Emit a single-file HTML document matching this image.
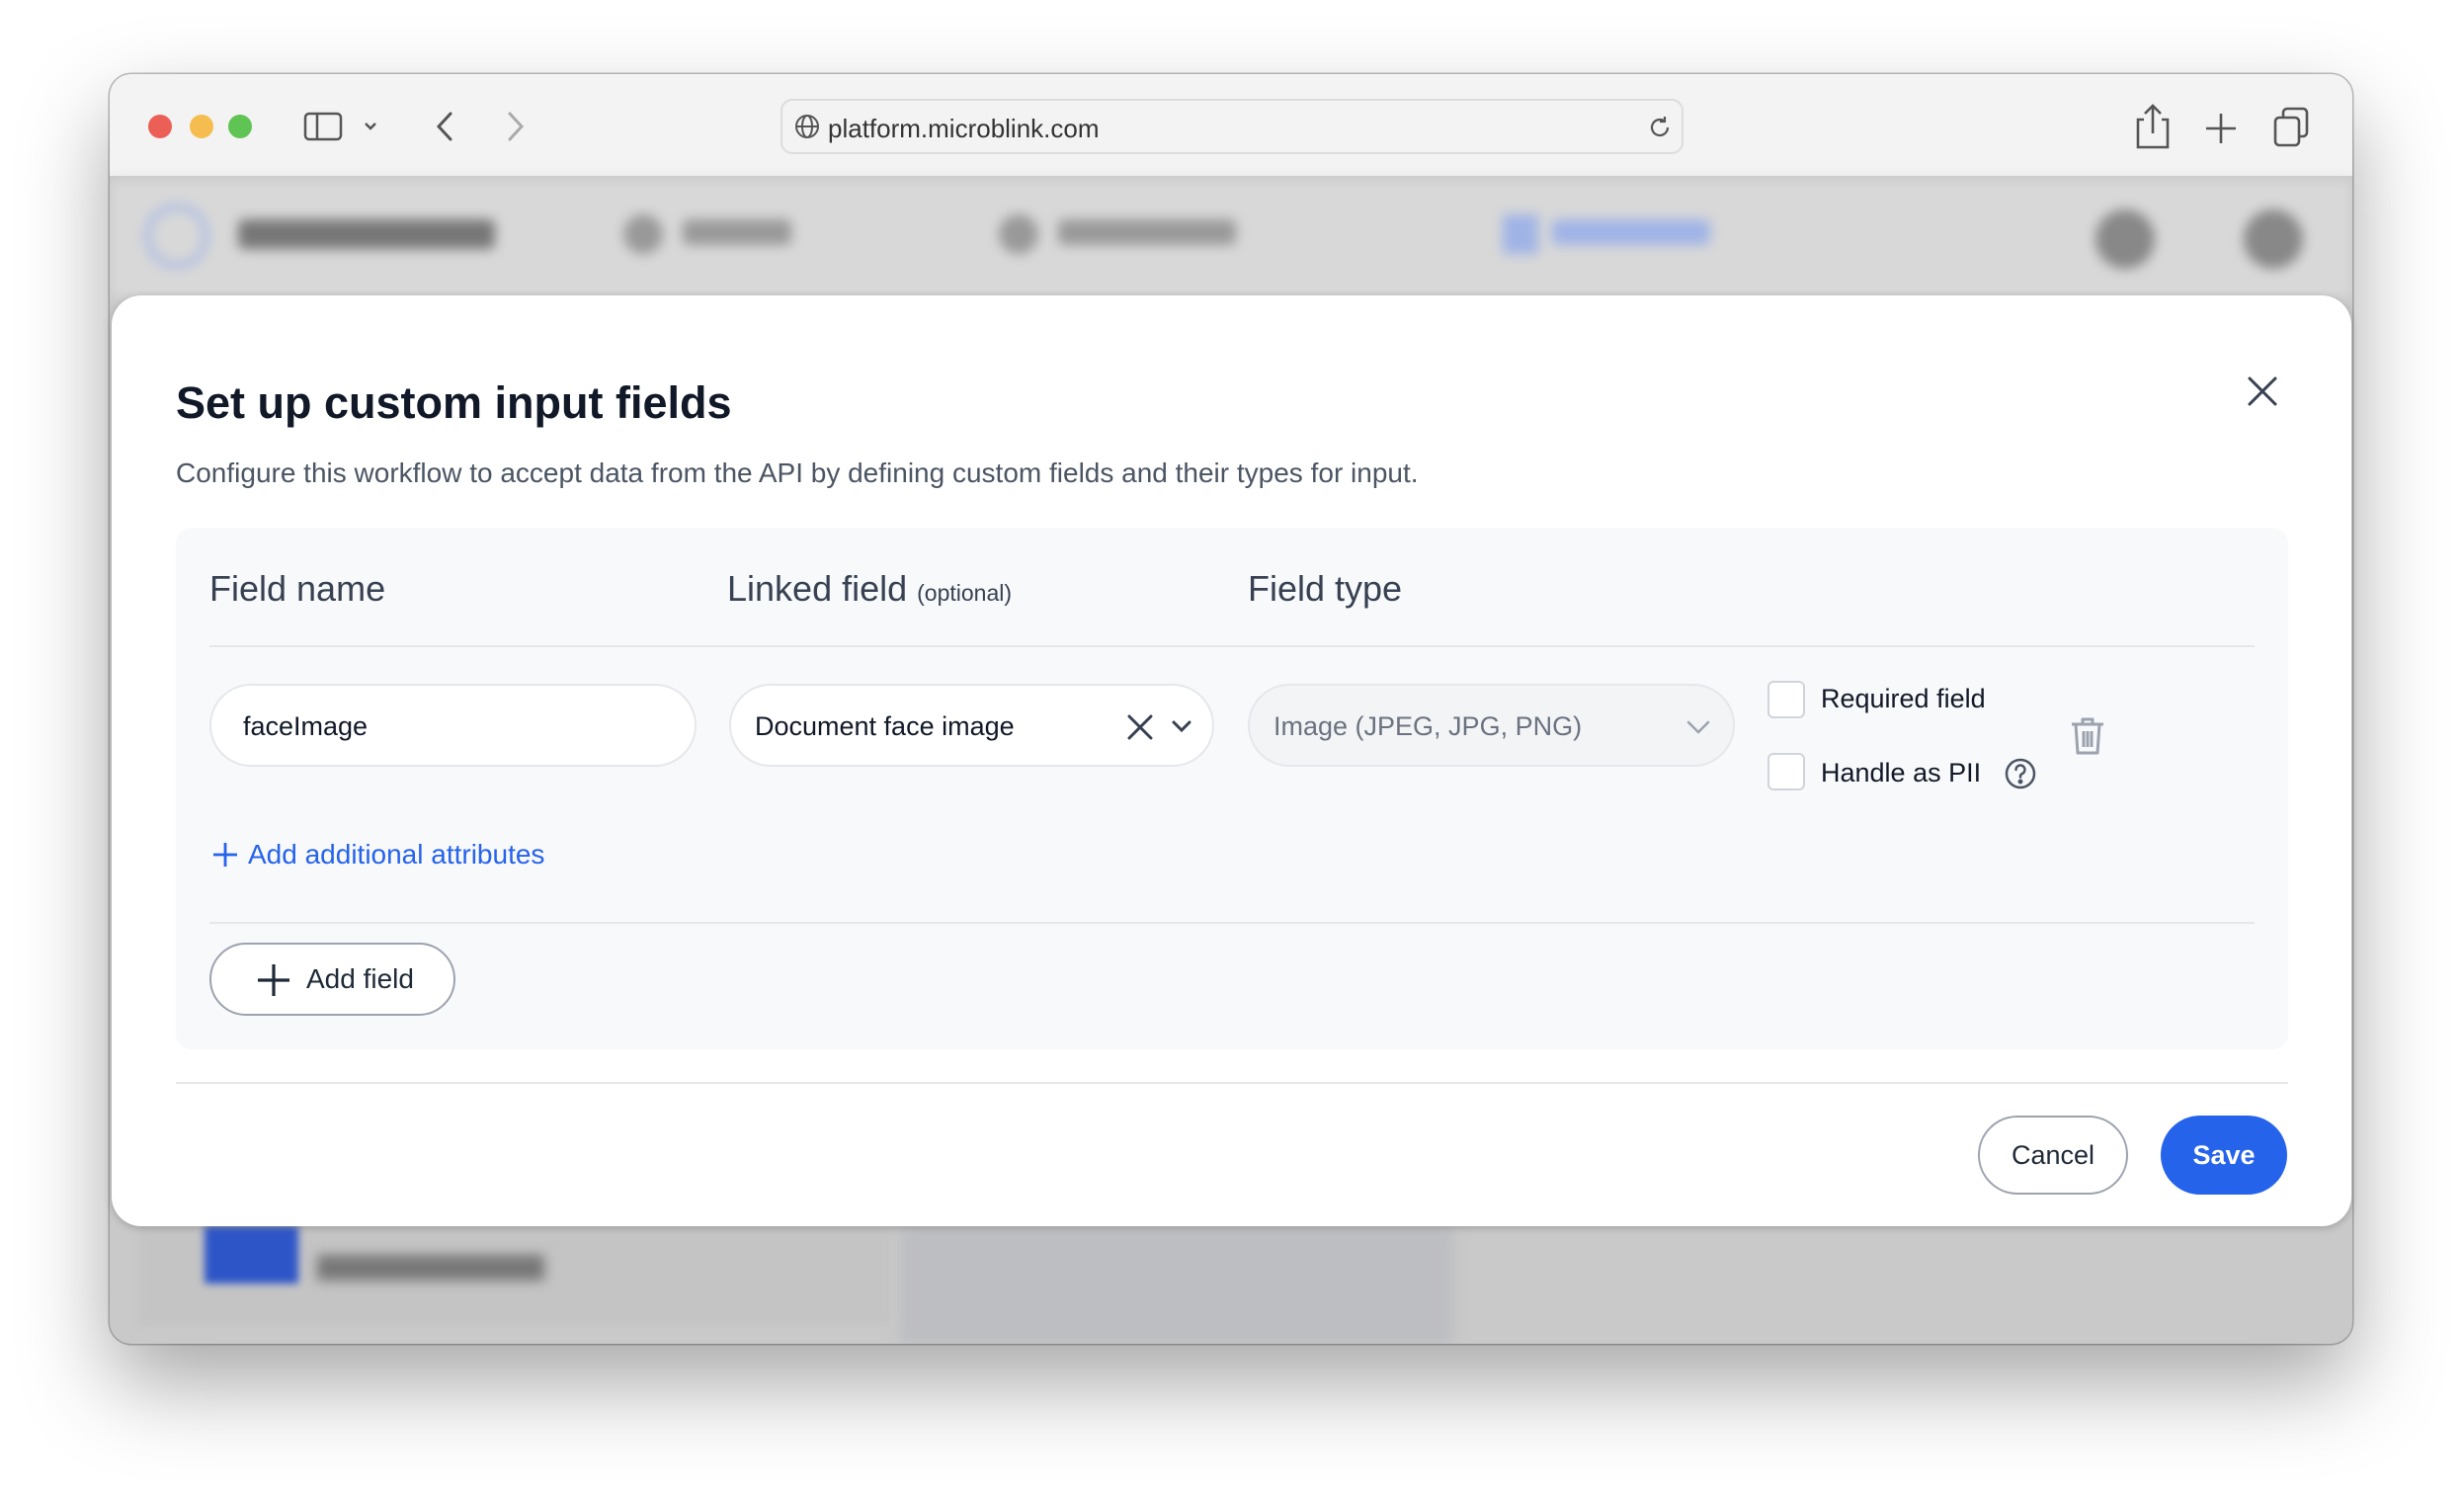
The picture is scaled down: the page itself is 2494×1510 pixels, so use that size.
<!DOCTYPE html>
<html><head><meta charset="utf-8"><style>
*{box-sizing:border-box;margin:0;padding:0}
body{width:2494px;height:1510px;background:#fff;font-family:"Liberation Sans",Arial,sans-serif;position:relative;overflow:hidden}
.win{position:absolute;left:111px;top:75px;width:2270px;height:1285px;border-radius:22px;overflow:hidden;box-shadow:0 40px 90px rgba(0,0,0,.35),0 0 0 1.5px rgba(0,0,0,.25);background:#c9c9ca}
.tb{position:absolute;left:0;top:0;width:100%;height:105px;background:#f3f3f3;border-bottom:2px solid #c9c9c9}
.dot{position:absolute;top:41px;width:24px;height:24px;border-radius:50%}
.url{position:absolute;left:679px;top:25px;width:914px;height:56px;border:2px solid #dcdcdc;border-radius:12px;background:#f3f3f3}
.url span{position:absolute;left:46px;top:13px;font-size:26px;color:#333}
.nav{position:absolute;left:0;top:107px;width:100%;height:120px;background:#d8d8d8;filter:blur(6px)}
.abs{position:absolute}
.modal{position:absolute;left:113px;top:299px;width:2267px;height:942px;background:#fff;border-radius:30px;box-shadow:0 2px 8px rgba(0,0,0,.2)}
.t{position:absolute;white-space:nowrap}
.inp{position:absolute;top:692px;height:84px;border:2px solid #e5e7eb;border-radius:42px;background:#fff;font-size:27px;color:#111827}
.inp span{position:absolute;left:32px;top:26px}
.cb{position:absolute;left:1789px;width:38px;height:38px;border:2px solid #d1d5db;border-radius:6px;background:#fff}
.btn{position:absolute;border-radius:40px;font-size:27px;text-align:center}
</style></head><body>
<div class="win">
 <div class="tb">
  <div class="dot" style="left:39px;background:#ec5f57"></div>
  <div class="dot" style="left:81px;background:#f5bd4f"></div>
  <div class="dot" style="left:120px;background:#5fc454"></div>
  <svg class="abs" style="left:196px;top:37px" width="80" height="32" viewBox="0 0 80 32" fill="none" stroke="#555" stroke-width="2.5"><rect x="2" y="3" width="36" height="26" rx="4"/><line x1="14" y1="3" x2="14" y2="29"/><path d="M63 13l5 5 5-5"/></svg>
  <svg class="abs" style="left:327px;top:36px" width="120" height="34" viewBox="0 0 120 34" fill="none" stroke-width="3" stroke-linecap="round"><path d="M18 4L6 17l12 13" stroke="#555"/><path d="M78 4l12 13-12 13" stroke="#aaa"/></svg>
  <div class="url">
   <svg class="abs" style="left:12px;top:13px" width="26" height="26" viewBox="0 0 26 26" fill="none" stroke="#555" stroke-width="2"><circle cx="13" cy="13" r="11"/><ellipse cx="13" cy="13" rx="5" ry="11"/><line x1="2" y1="13" x2="24" y2="13"/></svg>
   <span>platform.microblink.com</span>
   <svg class="abs" style="left:874px;top:13px" width="28" height="28" viewBox="0 0 28 28" fill="none" stroke="#555" stroke-width="2.2"><path d="M22 14a8 8 0 1 1-3-6.2"/><path d="M19 3v5h-5"/></svg>
  </div>
  <svg class="abs" style="left:2050px;top:28px" width="180" height="50" viewBox="0 0 180 50" fill="none" stroke="#555" stroke-width="2.6"><path d="M9 18H3v28h30V18h-6M18 4v28M10 12l8-8 8 8"/><path d="M87 12v30M72 27h30"/><rect x="142" y="16" width="24" height="28" rx="4"/><path d="M150 16v-5a4 4 0 0 1 4-4h16a4 4 0 0 1 4 4v20a4 4 0 0 1-4 4h-4"/></svg>
 </div>
 <div class="nav">
  <div class="abs" style="left:36px;top:25px;width:64px;height:64px;border-radius:50%;border:5px solid #9fb3e6"></div>
  <div class="abs" style="left:130px;top:40px;width:260px;height:30px;background:#777;border-radius:6px"></div>
  <div class="abs" style="left:520px;top:35px;width:40px;height:40px;border-radius:50%;background:#999"></div>
  <div class="abs" style="left:580px;top:40px;width:110px;height:26px;background:#999;border-radius:6px"></div>
  <div class="abs" style="left:900px;top:35px;width:40px;height:40px;border-radius:50%;background:#999"></div>
  <div class="abs" style="left:960px;top:40px;width:180px;height:26px;background:#999;border-radius:6px"></div>
  <div class="abs" style="left:1410px;top:35px;width:36px;height:40px;background:#9fb3e6"></div>
  <div class="abs" style="left:1460px;top:40px;width:160px;height:26px;background:#9fb3e6;border-radius:6px"></div>
  <div class="abs" style="left:2010px;top:30px;width:60px;height:60px;border-radius:50%;background:#888"></div>
  <div class="abs" style="left:2160px;top:30px;width:60px;height:60px;border-radius:50%;background:#888"></div>
 </div>
 <div class="abs" style="left:30px;top:1166px;width:760px;height:100px;background:#c4c4c4;filter:blur(4px)"></div>
 <div class="abs" style="left:96px;top:1166px;width:95px;height:58px;background:#2d55c8;filter:blur(4px)"></div>
 <div class="abs" style="left:210px;top:1195px;width:230px;height:26px;background:#777;filter:blur(6px)"></div>
 <div class="abs" style="left:800px;top:1166px;width:560px;height:119px;background:#bdbec1;filter:blur(6px)"></div>
</div>

<div class="modal"></div>
<div class="t" style="left:178px;top:382px;font-size:45px;font-weight:bold;color:#111827">Set up custom input fields</div>
<div class="t" style="left:178px;top:463px;font-size:28px;color:#4b5563">Configure this workflow to accept data from the API by defining custom fields and their types for input.</div>
<svg class="abs" style="left:2274px;top:380px" width="32" height="32" viewBox="0 0 32 32" stroke="#374151" stroke-width="3" stroke-linecap="round"><path d="M3 3l26 26M29 3L3 29"/></svg>

<div class="abs" style="left:178px;top:534px;width:2138px;height:528px;background:#f8f9fb;border-radius:16px"></div>
<div class="t" style="left:212px;top:575px;font-size:36px;color:#374151">Field name</div>
<div class="t" style="left:736px;top:575px;font-size:36px;color:#374151">Linked field <span style="font-size:23px">(optional)</span></div>
<div class="t" style="left:1263px;top:575px;font-size:36px;color:#374151">Field type</div>
<div class="abs" style="left:212px;top:653px;width:2070px;height:2px;background:#e5e7eb"></div>

<div class="inp" style="left:212px;width:493px"><span>faceImage</span></div>
<div class="inp" style="left:738px;width:491px"><span style="left:24px">Document face image</span>
 <svg class="abs" style="left:400px;top:28px" width="70" height="28" viewBox="0 0 70 28" fill="none" stroke="#374151" stroke-width="3" stroke-linecap="round"><path d="M3 3l22 22M25 3L3 25M48 9l8 8 8-8"/></svg></div>
<div class="inp" style="left:1263px;width:493px;background:#f3f4f6"><span style="left:24px;color:#6b7280">Image (JPEG, JPG, PNG)</span>
 <svg class="abs" style="left:440px;top:32px" width="28" height="20" viewBox="0 0 28 20" fill="none" stroke="#9ca3af" stroke-width="2.5" stroke-linecap="round"><path d="M4 5l10 10 10-10"/></svg></div>

<div class="cb" style="top:689px"></div>
<div class="t" style="left:1843px;top:692px;font-size:27px;color:#111827">Required field</div>
<div class="cb" style="top:762px"></div>
<div class="t" style="left:1843px;top:767px;font-size:27px;color:#111827">Handle as PII</div>
<svg class="abs" style="left:2028px;top:766px" width="34" height="34" viewBox="0 0 34 34" fill="none" stroke="#4b5563" stroke-width="2.5"><circle cx="17" cy="17" r="14"/><path d="M12.5 13a4.5 4.5 0 1 1 6 4.2c-1 .5-1.5 1.3-1.5 2.3v1" stroke-linecap="round"/><circle cx="17" cy="25" r="1.2" fill="#4b5563"/></svg>
<svg class="abs" style="left:2094px;top:724px" width="38" height="42" viewBox="0 0 38 42" fill="none" stroke="#9ca3af" stroke-width="3" stroke-linejoin="round"><path d="M3 9h32M14 9V4h10v5M7 9l2 29h20l2-29M15 16v16M19 16v16M23 16v16"/></svg>

<svg class="abs" style="left:215px;top:852px" width="26" height="26" viewBox="0 0 26 26" stroke="#2563eb" stroke-width="2.8"><path d="M13 1v24M1 13h24"/></svg>
<div class="t" style="left:251px;top:849px;font-size:28px;color:#2563eb">Add additional attributes</div>
<div class="abs" style="left:212px;top:933px;width:2070px;height:2px;background:#e5e7eb"></div>

<div class="btn" style="left:212px;top:954px;width:249px;height:74px;border:2px solid #9ca3af;background:#fff"></div>
<svg class="abs" style="left:260px;top:975px" width="34" height="34" viewBox="0 0 34 34" stroke="#1f2937" stroke-width="3.2"><path d="M17 1v32M1 17h32"/></svg>
<div class="t" style="left:310px;top:975px;font-size:28px;color:#1f2937">Add field</div>

<div class="abs" style="left:178px;top:1095px;width:2138px;height:2px;background:#e5e7eb"></div>
<div class="btn" style="left:2002px;top:1129px;width:152px;height:80px;border:2px solid #9ca3af;background:#fff;line-height:76px;color:#1f2937">Cancel</div>
<div class="btn" style="left:2187px;top:1129px;width:128px;height:80px;background:#2563eb;line-height:80px;color:#fff;font-weight:bold">Save</div>
</body></html>
